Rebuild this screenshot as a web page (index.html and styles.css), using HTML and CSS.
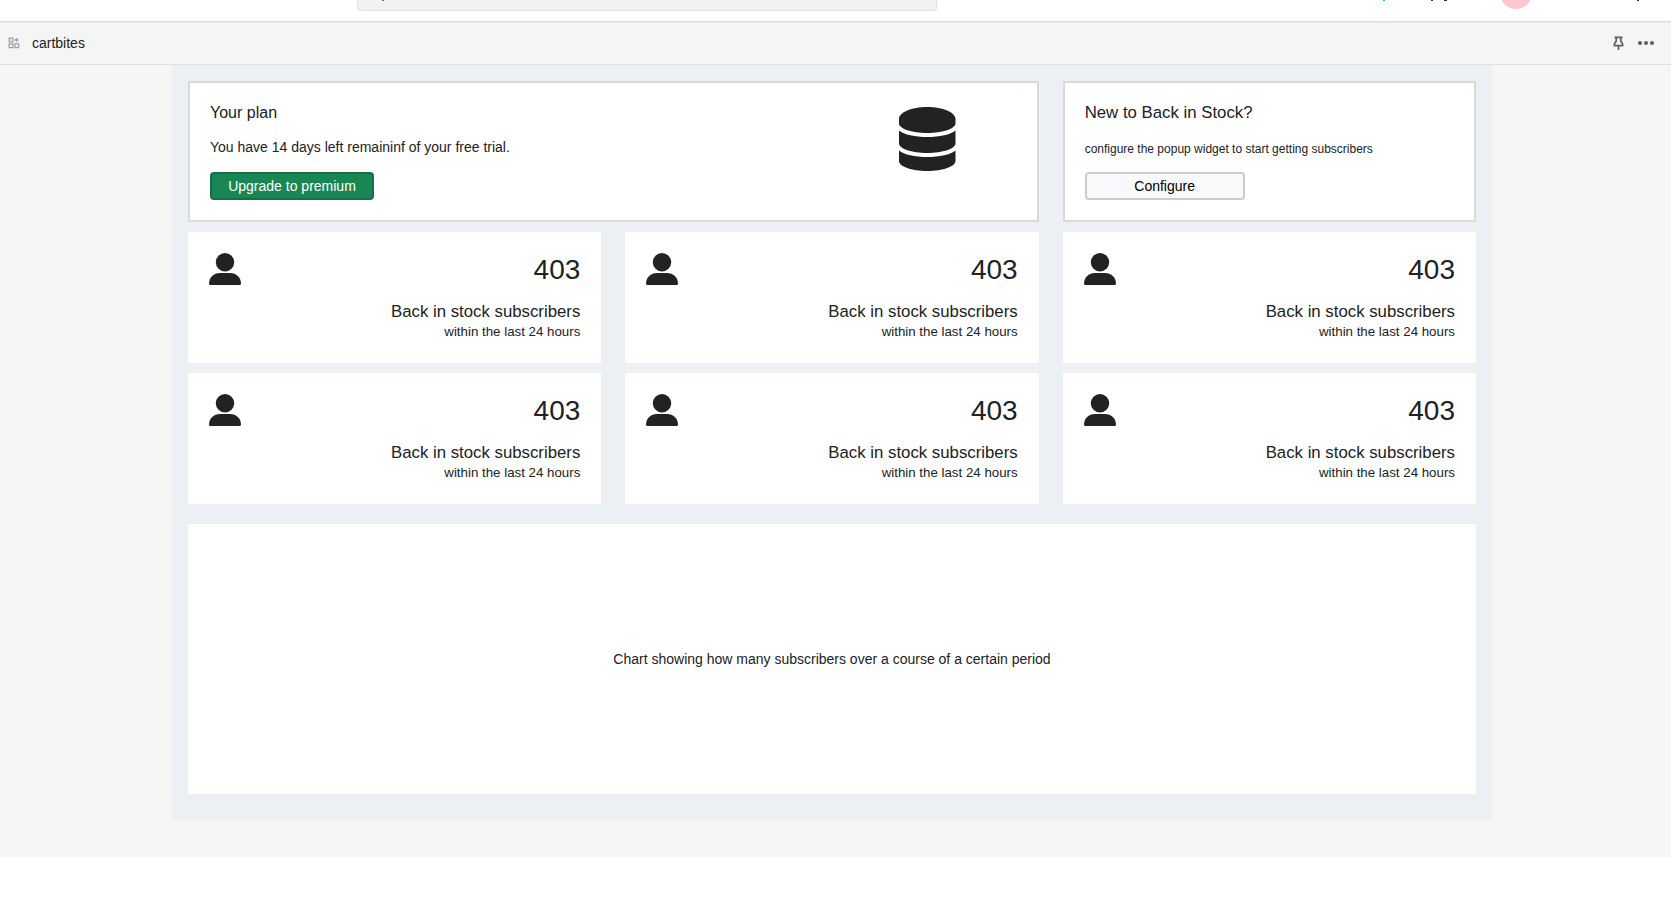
FILE: index.html
```
<!DOCTYPE html>
<html lang="en">
<head>
<meta charset="utf-8">
<title>cartbites</title>
<link rel="stylesheet" href="styles.css">
</head>
<body>
<svg class="sprite" width="0" height="0" aria-hidden="true">
  <symbol id="user" viewBox="0 0 32 32"><circle cx="16" cy="9.200" r="9.200"/><path d="M0 30.600C0 24.500 4.800 20 11 20h10C27.200 20 32 24.500 32 30.600 32 31.500 31.600 32 30.800 32H1.200C.4 32 0 31.500 0 30.600z"/></symbol>
</svg>
<header class="topbar">
  <div class="search"><i class="search-tail"></i></div>
  <div class="account">
    <i class="clip teal"></i><i class="clip p"></i><i class="clip g"></i><i class="avatar"></i><i class="clip last"></i>
  </div>
</header>
<nav class="appbar">
  <svg class="app-icon" width="12" height="12" viewBox="0 0 12 12" fill="none" stroke="#9ba3af" stroke-width="1.300"><path d="M1.150 1.150h3.700v3.700h-3.700zM1.150 6.950h3.700v3.700h-3.700zM6.950 6.950h3.700v3.700h-3.700zM8.500 1v4M6.500 3h4"/></svg>
  <span class="app-name">cartbites</span>
  <svg class="pin" width="12" height="15" viewBox="0 0 12 15" fill="none" stroke="#5c5f62" stroke-width="1.700"><path d="M1.500 1.300h8M3.200 1.500v3.700L1.400 7.800v1.800h8.200V7.800L7.800 5.200V1.500M5.500 9.700v4.300"/></svg>
  <svg class="more" width="16" height="4" viewBox="0 0 16 4" fill="#5c5f62"><circle cx="2" cy="2" r="2"/><circle cx="8" cy="2" r="2"/><circle cx="14" cy="2" r="2"/></svg>
</nav>
<main class="page">
  <div class="panel">
    <section class="grid">
      <article class="card plan">
        <div>
          <h2 class="plan-title">Your plan</h2>
          <p class="desc">You have 14 days left remaininf of your free trial.</p>
          <button class="btn primary">Upgrade to premium</button>
        </div>
        <svg class="database" width="57" height="64" viewBox="0 0 57 64" fill="#212224"><path d="M0 12C0 5.500 12.500 0 28.250 0S56.500 5.500 56.500 12v4.500C56.500 21.500 44 26 28.250 26S0 21.500 0 16.500zM0 23.500C5 27.800 16 30 28.250 30S51.500 27.800 56.500 23.500V36.500C56.500 41.500 44 46 28.250 46S0 41.500 0 36.500zM0 43.500C5 47.800 16 50 28.250 50S51.500 47.800 56.500 43.500V54C56.500 59.500 44 64 28.250 64S0 59.500 0 54z"/></svg>
      </article>
      <article class="card">
        <h2>New to Back in Stock?</h2>
        <p class="desc small">configure the popup widget to start getting subscribers</p>
        <button class="btn light">Configure</button>
      </article>
      <article class="stat"><svg class="user"><use href="#user"/></svg><strong>403</strong><h3>Back in stock subscribers</h3><p>within the last 24 hours</p></article>
      <article class="stat"><svg class="user"><use href="#user"/></svg><strong>403</strong><h3>Back in stock subscribers</h3><p>within the last 24 hours</p></article>
      <article class="stat"><svg class="user"><use href="#user"/></svg><strong>403</strong><h3>Back in stock subscribers</h3><p>within the last 24 hours</p></article>
      <article class="stat"><svg class="user"><use href="#user"/></svg><strong>403</strong><h3>Back in stock subscribers</h3><p>within the last 24 hours</p></article>
      <article class="stat"><svg class="user"><use href="#user"/></svg><strong>403</strong><h3>Back in stock subscribers</h3><p>within the last 24 hours</p></article>
      <article class="stat"><svg class="user"><use href="#user"/></svg><strong>403</strong><h3>Back in stock subscribers</h3><p>within the last 24 hours</p></article>
    </section>
    <section class="chart">Chart showing how many subscribers over a course of a certain period</section>
  </div>
</main>
</body>
</html>
```

FILE: styles.css
```
* { box-sizing: border-box; }
body { margin: 0; background: #fff; color: #202223; font: 14px/20px "Liberation Sans", Arial, sans-serif; overflow: hidden; }
h2, h3, p { margin: 0; font-weight: 400; }
.sprite { display: block; height: 0; }
.topbar { height: 22px; display: flex; justify-content: space-between; background: #fff; border-bottom: 1px solid #d9dadb; }
.search { width: 580px; height: 11px; margin-left: 357px; padding-left: 24px; background: #f1f2f4; border: 1px solid #dfe0e2; border-top: 0; border-radius: 0 0 4px 4px; }
.search-tail { display: block; width: 2px; height: 1px; background: #77797c; }
.account { position: relative; width: 296px; overflow: hidden; }
.clip { position: absolute; top: 0; height: 1px; width: 2px; background: #303338; }
.teal { left: 8px; background: #28b5bd; }
.p { left: 56px; }
.g { left: 69px; width: 3px; }
.last { left: 262px; }
.avatar { position: absolute; left: 125px; top: -23px; width: 32px; height: 32px; border-radius: 50%; background: #fec6ce; }
.appbar { height: 43px; display: flex; align-items: center; padding: 0 17px 1px 8px; background: #f5f5f5; border-top: 1px solid #ececec; border-bottom: 1px solid #dfe1e2; }
.app-name { margin-left: 12px; }
.pin { margin-left: auto; margin-right: 13px; }
.page { height: 792px; padding: 0 179px 0 172px; background: #f6f6f6; }
.panel { height: 755px; padding: 16px 16px 0; background: #ecf0f5; }
.grid { display: grid; grid-template-columns: repeat(3, 1fr); grid-template-rows: 141px 131px 131px; gap: 10px 24px; }
.card { padding: 20px 20px 0; background: #fff; border: 2px solid #d8d9da; }
.plan { grid-column: span 2; display: flex; justify-content: space-between; }
h2, h3 { font-size: 16.8px; line-height: 20px; }
.plan-title { font-size: 16px; }
.desc { margin: 14px 0 15px; }
.small { font-size: 12px; line-height: 24px; margin-bottom: 11px; }
.btn { display: block; height: 28px; padding: 0; border: 2px solid; border-radius: 4px; font: inherit; line-height: 20px; }
.primary { width: 164px; background: #198754; border-color: #176f47; color: #fff; }
.light { width: 160px; background: #f8f9fb; border-color: #cbcccd; color: #000; }
.database { margin: 4px 61px 0 0; }
.stat { display: grid; grid-template-columns: 32px 1fr; align-content: start; padding: 21px 21px 0; background: #fff; text-align: right; }
.user { width: 32px; height: 32px; fill: #212224; }
.stat strong { font-size: 28px; font-weight: 400; line-height: 34px; }
.stat h3 { grid-column: span 2; margin-top: 15px; }
.stat p { grid-column: span 2; font-size: 13.3px; line-height: 20px; }
.chart { height: 270px; margin-top: 20px; display: flex; align-items: center; justify-content: center; background: #fff; }
```
